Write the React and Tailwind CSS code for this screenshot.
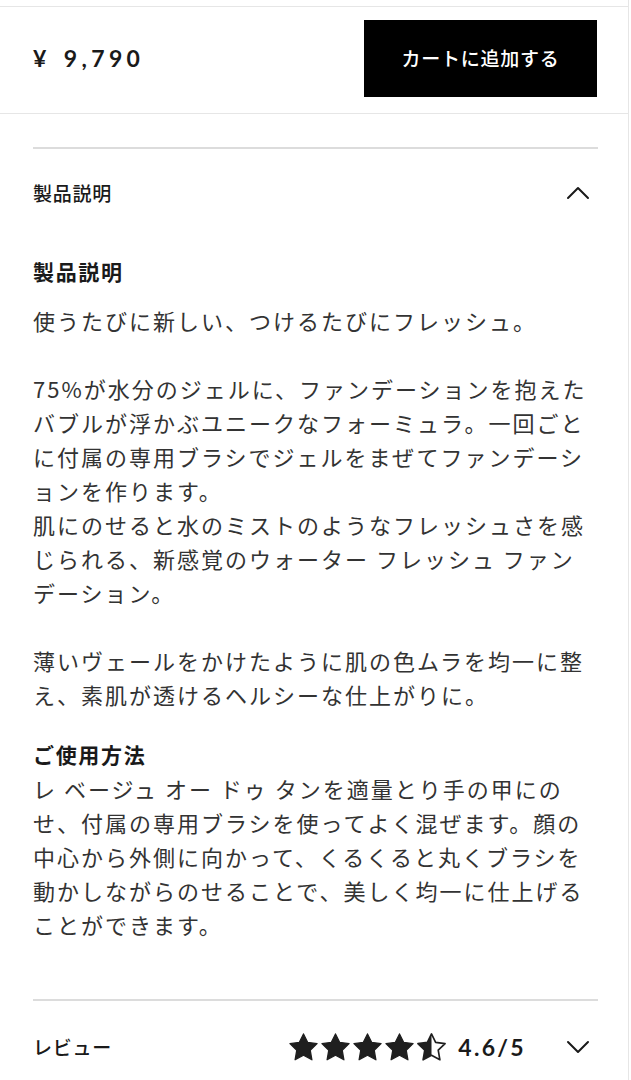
import React from "react";

const jp = { fontFamily: '"Noto Sans CJK JP", "Noto Sans", sans-serif' };
const num = { fontFamily: 'Lato, "Noto Sans CJK JP", sans-serif' };

// five-point star in a 24 box
const STAR = "12,1.5 15.2,8 22.5,9 17.2,14.1 18.5,21.5 12,18 5.5,21.5 6.8,14.1 1.5,9 8.8,8";

function Star({ half = false, id }) {
  if (half) {
    return (
      <svg width="31" height="31" viewBox="0 0 24 24">
        <defs>
          <clipPath id={id}>
            <rect x="0" y="0" width="12" height="24" />
          </clipPath>
        </defs>
        <polygon points={STAR} fill="#1f1f1f" clipPath={`url(#${id})`} />
        <polygon points={STAR} fill="none" stroke="#1f1f1f" strokeWidth="1.3" strokeLinejoin="round" />
      </svg>
    );
  }
  return (
    <svg width="31" height="31" viewBox="0 0 24 24">
      <polygon points={STAR} fill="#1f1f1f" stroke="#1f1f1f" strokeWidth="1" strokeLinejoin="round" />
    </svg>
  );
}

function Chevron({ up }) {
  return (
    <svg width="24" height="14" viewBox="0 0 24 14" fill="none">
      <polyline
        points={up ? "2,12 12,2 22,12" : "2,2 12,12 22,2"}
        stroke="#1a1a1a"
        strokeWidth="2"
        strokeLinecap="round"
        strokeLinejoin="round"
      />
    </svg>
  );
}

export default function App() {
  return (
    <div lang="ja" className="w-[629px] min-h-[1080px] bg-white border-r border-[#e6e6e6]" style={jp}>
      <div className="h-[6px]" />

      {/* price bar */}
      <div className="flex items-center justify-between border-y border-[#e6e6e6] pl-[33px] pr-[31px] pt-[13px] pb-[16px]">
        <div className="flex items-center text-[23px] font-bold text-[#1a1a1a] tracking-[0.19em]" style={num}>
          <span>¥</span>
          <span className="ml-[13px]">9,790</span>
        </div>
        <button className="w-[233px] h-[77px] bg-black text-white text-[19px] font-medium tracking-[0.04em]">
          カートに追加する
        </button>
      </div>

      {/* description accordion */}
      <div className="pl-[33px] pr-[30px] pt-[33px]">
        <div className="border-t-2 border-[#dcdcdc]">
          <div className="flex items-center justify-between h-[88px] pr-[8px]">
            <span className="text-[19px] font-medium text-[#1a1a1a] tracking-[0.04em]">製品説明</span>
            <Chevron up />
          </div>

          <div className="pt-[17px] pb-[58px]">
            <h3 className="text-[21px] font-bold leading-[34px] tracking-[0.08em] text-[#1a1a1a] mb-[15px]">
              製品説明
            </h3>
            <p className="text-[22px] leading-[34px] tracking-[2px] text-[#333333] [line-break:loose]">
              使うたびに新しい、つけるたびにフレッシュ。
              <br />
              <br />
              75%が水分のジェルに、ファンデーションを抱えたバブルが浮かぶユニークなフォーミュラ。一回ごとに付属の専用ブラシでジェルをまぜてファンデーションを作ります。
              <br />
              肌にのせると水のミストのようなフレッシュさを感じられる、新感覚のウォーター フレッシュ ファンデーション。
              <br />
              <br />
              薄いヴェールをかけたように肌の色ムラを均一に整え、素肌が透けるヘルシーな仕上がりに。
            </p>
            <h3 className="mt-[26px] text-[21px] font-bold leading-[34px] tracking-[0.08em] text-[#1a1a1a]">
              ご使用方法
            </h3>
            <p className="text-[22px] leading-[34px] tracking-[2px] text-[#333333] [line-break:loose]">
              レ ベージュ オー ドゥ タンを適量とり手の甲にのせ、付属の専用ブラシを使ってよく混ぜます。顔の中心から外側に向かって、くるくると丸くブラシを動かしながらのせることで、美しく均一に仕上げることができます。
            </p>
          </div>
        </div>

        {/* reviews accordion */}
        <div className="border-t-2 border-[#dcdcdc]">
          <div className="flex items-center justify-between h-[92px] pr-[8px]">
            <span className="text-[19px] font-medium text-[#1a1a1a] tracking-[0.04em]">レビュー</span>
            <div className="flex items-center">
              <div className="flex items-center gap-[1px]">
                <Star />
                <Star />
                <Star />
                <Star />
                <Star half id="half-star" />
              </div>
              <span className="ml-[11px] text-[23px] font-bold text-[#1a1a1a] tracking-[0.1em]" style={num}>
                4.6/5
              </span>
              <div className="ml-[40px]">
                <Chevron />
              </div>
            </div>
          </div>
        </div>
      </div>
    </div>
  );
}
